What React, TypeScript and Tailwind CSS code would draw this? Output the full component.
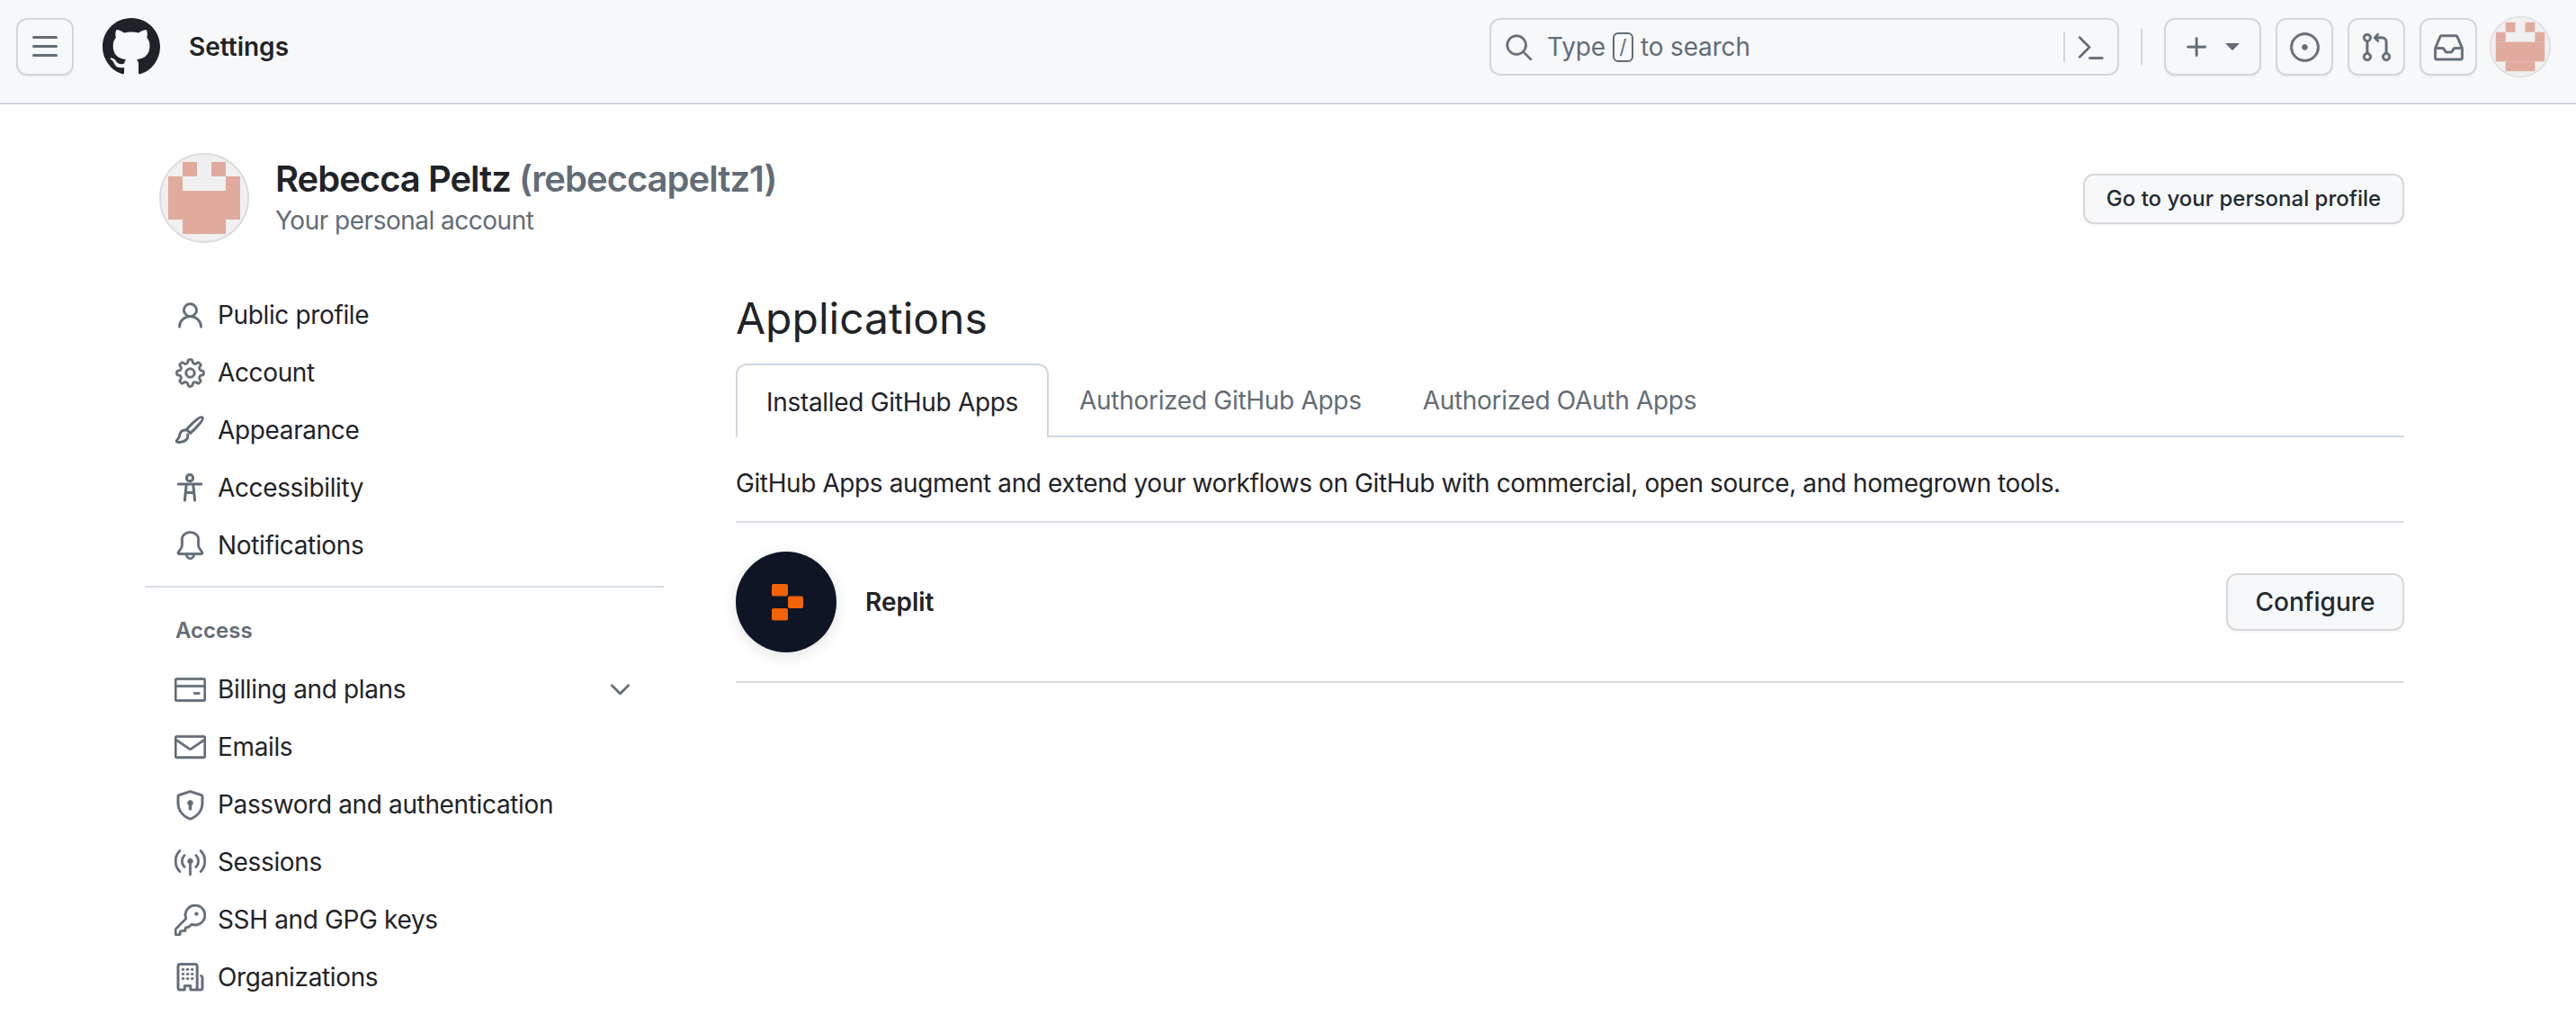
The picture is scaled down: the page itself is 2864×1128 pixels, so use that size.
import type { ReactNode } from "react";
import {
  GoBell,
  GoBroadcast,
  GoChevronDown,
  GoCommandPalette,
  GoCreditCard,
  GoGear,
  GoGitPullRequest,
  GoInbox,
  GoIssueOpened,
  GoKey,
  GoMail,
  GoOrganization,
  GoPerson,
  GoPlus,
  GoSearch,
  GoShieldLock,
  GoTriangleDown,
} from "react-icons/go";

type IconProps = { size?: number; strokeWidth?: number; className?: string };

function ThreeBars({ className }: IconProps) {
  return (
    <svg viewBox="0 0 16 16" width={32} height={32} fill="currentColor" className={className}>
      <path d="M1 2.75A.75.75 0 0 1 1.75 2h12.5a.75.75 0 0 1 0 1.5H1.75A.75.75 0 0 1 1 2.75Zm0 5A.75.75 0 0 1 1.75 7h12.5a.75.75 0 0 1 0 1.5H1.75A.75.75 0 0 1 1 7.75ZM1.75 12h12.5a.75.75 0 0 1 0 1.5H1.75a.75.75 0 0 1 0-1.5Z" />
    </svg>
  );
}

function GithubMark({ className }: IconProps) {
  return (
    <svg viewBox="0 0 16 16" width={64} height={64} fill="currentColor" className={className}>
      <path d="M8 0c4.42 0 8 3.58 8 8a8.013 8.013 0 0 1-5.45 7.59c-.4.08-.55-.17-.55-.38 0-.27.01-1.13.01-2.2 0-.75-.25-1.23-.54-1.48 1.78-.2 3.65-.88 3.65-3.95 0-.88-.31-1.59-.82-2.15.08-.2.36-1.02-.08-2.12 0 0-.67-.22-2.2.82-.64-.18-1.32-.27-2-.27-.68 0-1.36.09-2 .27-1.53-1.03-2.2-.82-2.2-.82-.44 1.1-.16 1.92-.08 2.12-.51.56-.82 1.28-.82 2.15 0 3.06 1.86 3.75 3.64 3.95-.23.2-.44.55-.51 1.07-.46.21-1.61.55-2.33-.66-.15-.24-.6-.83-1.23-.82-.67.01-.27.38.01.53.34.19.73.9.82 1.13.16.45.68 1.31 2.69.94 0 .67.01 1.3.01 1.49 0 .21-.15.45-.55.38A7.995 7.995 0 0 1 0 8c0-4.42 3.58-8 8-8Z" />
    </svg>
  );
}

function Paintbrush({ className }: IconProps) {
  return (
    <svg viewBox="0 0 16 16" width={32} height={32} fill="none" stroke="currentColor" strokeWidth="1.5" strokeLinejoin="round" strokeLinecap="round" className={className}>
      <path d="M15 1c-.8-.8-3 .7-6 3.7L6.2 7.6l2.1 2.1 2.9-2.8c3-3 4.6-5.1 3.8-5.9Z" />
      <path d="M6 8c-1.9-.3-3.2.7-3.5 2.4-.2 1.2-.7 2.4-1.7 3.3-.3.4-.1.8.4.9 1.7.3 3.5-.1 4.7-1.1 1-.9 1.2-2 .9-3" />
    </svg>
  );
}

function Accessibility({ className }: IconProps) {
  return (
    <svg viewBox="0 0 16 16" width={32} height={32} fill="none" stroke="currentColor" strokeWidth="1.5" strokeLinecap="round" className={className}>
      <circle cx="8" cy="2.6" r="1.8" />
      <path d="M1.6 6h12.8M6.1 6.4 5.2 15M9.9 6.4l.9 8.6M5.8 10.8h4.4" />
    </svg>
  );
}

const TOP_ITEMS = [
  { label: "Public profile", icon: GoPerson },
  { label: "Account", icon: GoGear },
  { label: "Appearance", icon: Paintbrush },
  { label: "Accessibility", icon: Accessibility },
  { label: "Notifications", icon: GoBell },
];

const ACCESS_ITEMS = [
  { label: "Billing and plans", icon: GoCreditCard, chevron: true },
  { label: "Emails", icon: GoMail },
  { label: "Password and authentication", icon: GoShieldLock },
  { label: "Sessions", icon: GoBroadcast },
  { label: "SSH and GPG keys", icon: GoKey },
  { label: "Organizations", icon: GoOrganization },
];

function Identicon({ className }: { className: string }) {
  return (
    <svg viewBox="0 0 100 100" className={className}>
      <circle cx="50" cy="50" r="49" fill="#f0f0f0" stroke="#dcdcdc" strokeWidth="2" />
      <g fill="#e0ab9e">
        <rect x="26" y="10" width="16" height="16" />
        <rect x="58" y="10" width="16" height="16" />
        <rect x="10" y="26" width="16" height="16" />
        <rect x="74" y="26" width="16" height="16" />
        <rect x="10" y="42" width="80" height="32" />
        <rect x="26" y="74" width="48" height="16" />
      </g>
    </svg>
  );
}

function IconButton({ children }: { children: ReactNode }) {
  return (
    <button className="flex h-[64px] w-[64px] items-center justify-center rounded-[12px] border-2 border-[#d0d7de] bg-[#f6f8fa] text-[#636c76] shadow-[0_2px_0_rgba(31,35,40,0.04)]">
      {children}
    </button>
  );
}

function Header() {
  return (
    <header className="flex h-[116px] items-center border-b-2 border-[#d0d7de] bg-[#f6f8fa] pb-[10px] pl-[18px] pr-[28px]">
      <IconButton>
        <ThreeBars />
      </IconButton>
      <GithubMark className="ml-[32px] text-[#1f2328]" />
      <span className="ml-[32px] text-[28px] font-semibold text-[#1f2328]">Settings</span>
      <div className="ml-auto flex h-[64px] w-[700px] items-center rounded-[12px] border-2 border-[#d0d7de] pl-[14px] pr-[12px] text-[#636c76]">
        <GoSearch size={33} strokeWidth={0.5} />
        <span className="ml-[15px] flex items-center text-[28px] tracking-[-0.15px]">
          Type
          <span className="mx-[8px] flex h-[33px] w-[23px] items-center justify-center rounded-[6px] border-2 border-[#636c76] text-[22px] leading-none">
            /
          </span>
          to search
        </span>
        <span className="ml-auto h-[34px] w-[2px] bg-[#d0d7de]" />
        <GoCommandPalette size={35} strokeWidth={0.5} className="ml-[11px]" />
      </div>
      <span className="mx-[24px] h-[40px] w-[2px] bg-[#d0d7de]" />
      <button className="flex h-[64px] w-[108px] items-center justify-center gap-[8px] rounded-[12px] border-2 border-[#d0d7de] bg-[#f6f8fa] text-[#636c76] shadow-[0_2px_0_rgba(31,35,40,0.04)]">
        <GoPlus size={35} strokeWidth={0.5} />
        <GoTriangleDown size={28} />
      </button>
      <div className="ml-[16px] flex items-center gap-[16px]">
        <IconButton>
          <GoIssueOpened size={35} strokeWidth={0.5} />
        </IconButton>
        <IconButton>
          <GoGitPullRequest size={35} strokeWidth={0.5} />
        </IconButton>
        <IconButton>
          <GoInbox size={35} strokeWidth={0.5} />
        </IconButton>
      </div>
      <Identicon className="ml-[14px] h-[68px] w-[68px]" />
    </header>
  );
}

function NavItem({ label, icon: Icon, chevron }: { label: string; icon: (props: IconProps) => ReactNode; chevron?: boolean }) {
  return (
    <a className="flex h-[64px] items-center pl-[34px] pr-[31px] text-[28px] tracking-[-0.36px] text-[#1f2328]">
      <span className="flex w-[32px] justify-center">
        <Icon size={35} strokeWidth={0.5} className="shrink-0 text-[#636c76]" />
      </span>
      <span className="ml-[15px]">{label}</span>
      {chevron && <GoChevronDown size={35} strokeWidth={0.5} className="ml-auto text-[#636c76]" />}
    </a>
  );
}

function Sidebar() {
  return (
    <nav className="w-[577px] shrink-0 pt-[2px]">
      {TOP_ITEMS.map((item) => (
        <NavItem key={item.label} {...item} />
      ))}
      <div className="mb-[15px] mt-[13px] h-[2px] bg-[#d8dee4]" />
      <div className="flex h-[66px] items-center pl-[34px] text-[24px] font-semibold text-[#636c76]">Access</div>
      {ACCESS_ITEMS.map((item) => (
        <NavItem key={item.label} {...item} />
      ))}
    </nav>
  );
}

function ReplitLogo() {
  return (
    <div className="flex h-[112px] w-[112px] items-center justify-center rounded-full bg-[#0e1525] shadow-[0_4px_16px_rgba(31,35,40,0.12)]">
      <svg viewBox="0 0 112 112" className="h-[112px] w-[112px]">
        <g fill="#f26207">
          <rect x="40" y="36" width="18" height="13.5" rx="2" />
          <rect x="58" y="49.5" width="17" height="13.5" rx="2" />
          <rect x="40" y="63" width="18" height="13.5" rx="2" />
        </g>
      </svg>
    </div>
  );
}

function Applications() {
  return (
    <main className="min-w-0 flex-1">
      <h1 className="pt-[2px] text-[48px] leading-[72px] text-[#1f2328]">Applications</h1>
      <div className="mt-[14px] flex h-[82px] border-b-2 border-[#d0d7de] text-[28px] tracking-[-0.3px]">
        <a className="-mb-[2px] flex items-center rounded-t-[12px] border-2 border-b-0 border-[#d0d7de] bg-white px-[32px] pt-[2px] text-[#1f2328]">
          Installed GitHub Apps
        </a>
        <a className="flex items-center px-[34px] pt-[2px] text-[#636c76]">Authorized GitHub Apps</a>
        <a className="flex items-center px-[34px] pt-[2px] text-[#636c76]">Authorized OAuth Apps</a>
      </div>
      <p className="flex h-[95px] items-center border-b-2 border-[#d8dee4] pt-[9px] text-[28px] tracking-[-0.4px] text-[#1f2328]">
        GitHub Apps augment and extend your workflows on GitHub with commercial, open source, and homegrown tools.
      </p>
      <div className="flex h-[178px] items-center border-b-2 border-[#d8dee4]">
        <ReplitLogo />
        <span className="ml-[32px] text-[28px] font-semibold text-[#1f2328]">Replit</span>
        <button className="ml-auto h-[64px] w-[198px] rounded-[12px] border-2 border-[#d8d8da] bg-[#f6f8fa] text-[28px] font-medium text-[#24292f] shadow-[0_2px_0_rgba(31,35,40,0.04)]">
          Configure
        </button>
      </div>
    </main>
  );
}

export default function App() {
  return (
    <div className="h-[1128px] w-[2864px] overflow-hidden bg-white font-['Inter',sans-serif]">
      <Header />
      <div className="pl-[161px] pr-[191px]">
        <div className="flex items-center pt-[54px]">
          <Identicon className="ml-[16px] h-[100px] w-[100px]" />
          <div className="ml-[29px]">
            <h2 className="text-[40px] font-semibold leading-[48px] tracking-[-1px] text-[#1f2328]">
              Rebecca Peltz <span className="text-[#636c76]">(rebeccapeltz1)</span>
            </h2>
            <p className="pt-[2px] text-[28px] leading-[40px] tracking-[-0.5px] text-[#636c76]">Your personal account</p>
          </div>
          <button className="ml-auto mt-[2px] h-[56px] w-[357px] rounded-[12px] border-2 border-[#d8d8da] bg-[#f6f8fa] text-[24px] font-medium text-[#24292f] shadow-[0_2px_0_rgba(31,35,40,0.04)]">
            Go to your personal profile
          </button>
        </div>
        <div className="mt-[46px] flex gap-[80px]">
          <Sidebar />
          <Applications />
        </div>
      </div>
    </div>
  );
}
